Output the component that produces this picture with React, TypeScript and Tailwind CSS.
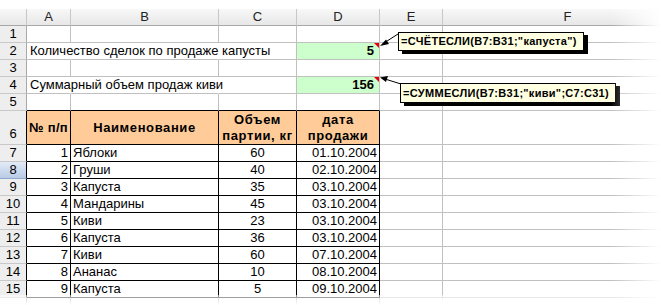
import React from 'react';

const W = ['w-[27px]', 'w-[44px]', 'w-[148px]', 'w-[78px]', 'w-[83px]', 'w-[63px]', 'w-[250px]'];
const GRID = 'border-[#c0c0c0]';

const items: [number, string, number, string][] = [
    [1, 'Яблоки', 60, '01.10.2004'],
    [2, 'Груши', 40, '02.10.2004'],
    [3, 'Капуста', 35, '03.10.2004'],
    [4, 'Мандарины', 45, '03.10.2004'],
    [5, 'Киви', 23, '03.10.2004'],
    [6, 'Капуста', 36, '03.10.2004'],
    [7, 'Киви', 60, '07.10.2004'],
    [8, 'Ананас', 10, '08.10.2004'],
    [9, 'Капуста', 5, '09.10.2004'],
];

const RowHead: React.FC<{ n?: number; dark?: boolean; selected?: boolean; bottom?: boolean }> = ({ n, dark, selected, bottom }) => (
    <div
        className={`${W[0]} shrink-0 h-full flex justify-center border-r border-b text-[13px] ${bottom ? 'items-end pb-px' : 'items-center'} ${dark ? 'border-r-black' : 'border-r-[#a8a8a8]'} ${selected ? 'bg-gradient-to-b from-[#e3ebf7] to-[#b9cbe6] border-b-[#8fa7cc]' : 'bg-[#eeeeee] border-b-[#c8c8c8]'}`}
    >
        {n}
    </div>
);

const Cell: React.FC<{ i: number; wrap?: boolean; className?: string; children?: React.ReactNode }> = ({ i, wrap, className = '', children }) => (
    <div className={`${W[i]} shrink-0 h-full border-r border-b flex items-center text-[13px] ${wrap ? 'whitespace-normal' : 'whitespace-nowrap'} ${className}`}>
        {children}
    </div>
);

const Flag = () => (
    <span className="absolute right-0 top-0 w-0 h-0 border-t-[5px] border-t-red-600 border-l-[5px] border-l-transparent" />
);

export default function App() {
    return (
        <div className="relative w-[661px] h-[305px] overflow-hidden bg-white text-black font-['Liberation_Sans',Arial,sans-serif]">
            <div className="h-[9px]" />
            {/* column letters */}
            <div className="flex h-[17px] bg-gradient-to-b from-[#f8f8f8] to-[#e6e6e6]">
                {['', 'A', 'B', 'C', 'D', 'E', 'F'].map((c, i) => (
                    <div key={i} className={`${W[i]} shrink-0 h-full flex items-center justify-center border-r border-b border-r-[#c8c8c8] border-b-[#a8a8a8] text-[13px] text-[#222]`}>
                        {c}
                    </div>
                ))}
            </div>

            <div className="flex h-[17px]">
                <RowHead n={1} />
                {[1, 2, 3, 4, 5, 6].map(i => <Cell key={i} i={i} className={GRID} />)}
            </div>

            <div className="flex h-[17px]">
                <RowHead n={2} />
                <Cell i={1} className={`${GRID} border-r-transparent pl-[3px]`}>Количество сделок по продаже капусты</Cell>
                <Cell i={2} className={`${GRID} border-r-transparent`} />
                <Cell i={3} className={GRID} />
                <Cell i={4} className={`${GRID} bg-[#ccffcc] justify-end pr-[5px] font-bold relative`}>5<Flag /></Cell>
                <Cell i={5} className={GRID} />
                <Cell i={6} className={GRID} />
            </div>

            <div className="flex h-[17px]">
                <RowHead n={3} />
                {[1, 2, 3, 4, 5, 6].map(i => <Cell key={i} i={i} className={GRID} />)}
            </div>

            <div className="flex h-[17px]">
                <RowHead n={4} />
                <Cell i={1} className={`${GRID} border-r-transparent pl-[3px]`}>Суммарный объем продаж киви</Cell>
                <Cell i={2} className={`${GRID} border-r-transparent`} />
                <Cell i={3} className={GRID} />
                <Cell i={4} className={`${GRID} bg-[#ccffcc] justify-end pr-[5px] font-bold relative`}>156<Flag /></Cell>
                <Cell i={5} className={GRID} />
                <Cell i={6} className={GRID} />
            </div>

            <div className="flex h-[17px]">
                <RowHead n={5} />
                {[1, 2, 3, 4].map(i => <Cell key={i} i={i} className="border-r-[#c0c0c0] border-b-black" />)}
                <Cell i={5} className={GRID} />
                <Cell i={6} className={GRID} />
            </div>

            {/* table header */}
            <div className="flex h-[34px]">
                <RowHead n={6} dark bottom />
                <Cell i={1} className="border-black bg-[#ffcc99] justify-center font-bold tracking-[0.3px]">№ п/п</Cell>
                {['Наименование', 'Объем партии, кг', 'дата продажи'].map((t, k) => (
                    <Cell key={k} i={k + 2} wrap className="border-black bg-[#ffcc99] justify-center text-center font-bold tracking-[0.6px] leading-[16px] px-[2px]">
                        <span>{t}</span>
                    </Cell>
                ))}
                <Cell i={5} className={GRID} />
                <Cell i={6} className={GRID} />
            </div>

            {items.map(([n, name, qty, date], r) => (
                <div key={n} className="flex h-[17px]">
                    <RowHead n={r + 7} dark selected={r + 7 === 8} />
                    <Cell i={1} className="border-black justify-end pr-[2px]">{n}</Cell>
                    <Cell i={2} className="border-black pl-[2px]">{name}</Cell>
                    <Cell i={3} className="border-black justify-center">{qty}</Cell>
                    <Cell i={4} className="border-black justify-end pr-[2px]">{date}</Cell>
                    <Cell i={5} className={GRID} />
                    <Cell i={6} className={GRID} />
                </div>
            ))}
            <div className="flex h-[17px] opacity-40">
                <RowHead dark />
                {[1, 2, 3, 4].map(i => <Cell key={i} i={i} className="border-black" />)}
                <Cell i={5} className={GRID} />
                <Cell i={6} className={GRID} />
            </div>

            {/* comments */}
            <div className="absolute left-[398px] top-[32px] w-[186px] h-[19px] border border-black bg-[#ffffe1] shadow-[4px_3px_0_#000] flex items-center pl-[2px] text-[11px] font-bold tracking-[0.3px] whitespace-nowrap">
                =СЧЁТЕСЛИ(B7:B31;"капуста")
            </div>
            <div className="absolute left-[400px] top-[83px] w-[216px] h-[20px] border border-black bg-[#ffffe1] shadow-[4px_3px_0_#000] flex items-center pl-[2px] text-[11px] font-bold tracking-[0.3px] whitespace-nowrap">
                =СУММЕСЛИ(B7:B31;"киви";C7:C31)
            </div>

            <svg className="absolute left-0 top-0 pointer-events-none" width="661" height="305">
                <line x1="398" y1="34" x2="384" y2="43" stroke="#000" strokeWidth="1" />
                <polygon points="380,46 386,39.5 389,44" fill="#000" />
                <line x1="401" y1="84" x2="385" y2="79" stroke="#000" strokeWidth="1" />
                <polygon points="380,77.5 388,76 386,82" fill="#000" />
            </svg>

            {/* fades */}
            <div className="absolute right-0 top-0 h-full w-[50px] bg-gradient-to-r from-white/0 to-white pointer-events-none" />
            <div className="absolute left-0 bottom-0 w-full h-[10px] bg-gradient-to-b from-white/50 to-white pointer-events-none" />
            <div className="absolute left-0 top-0 w-full h-[10px] bg-gradient-to-b from-white to-white/0 pointer-events-none" />
        </div>
    );
}
